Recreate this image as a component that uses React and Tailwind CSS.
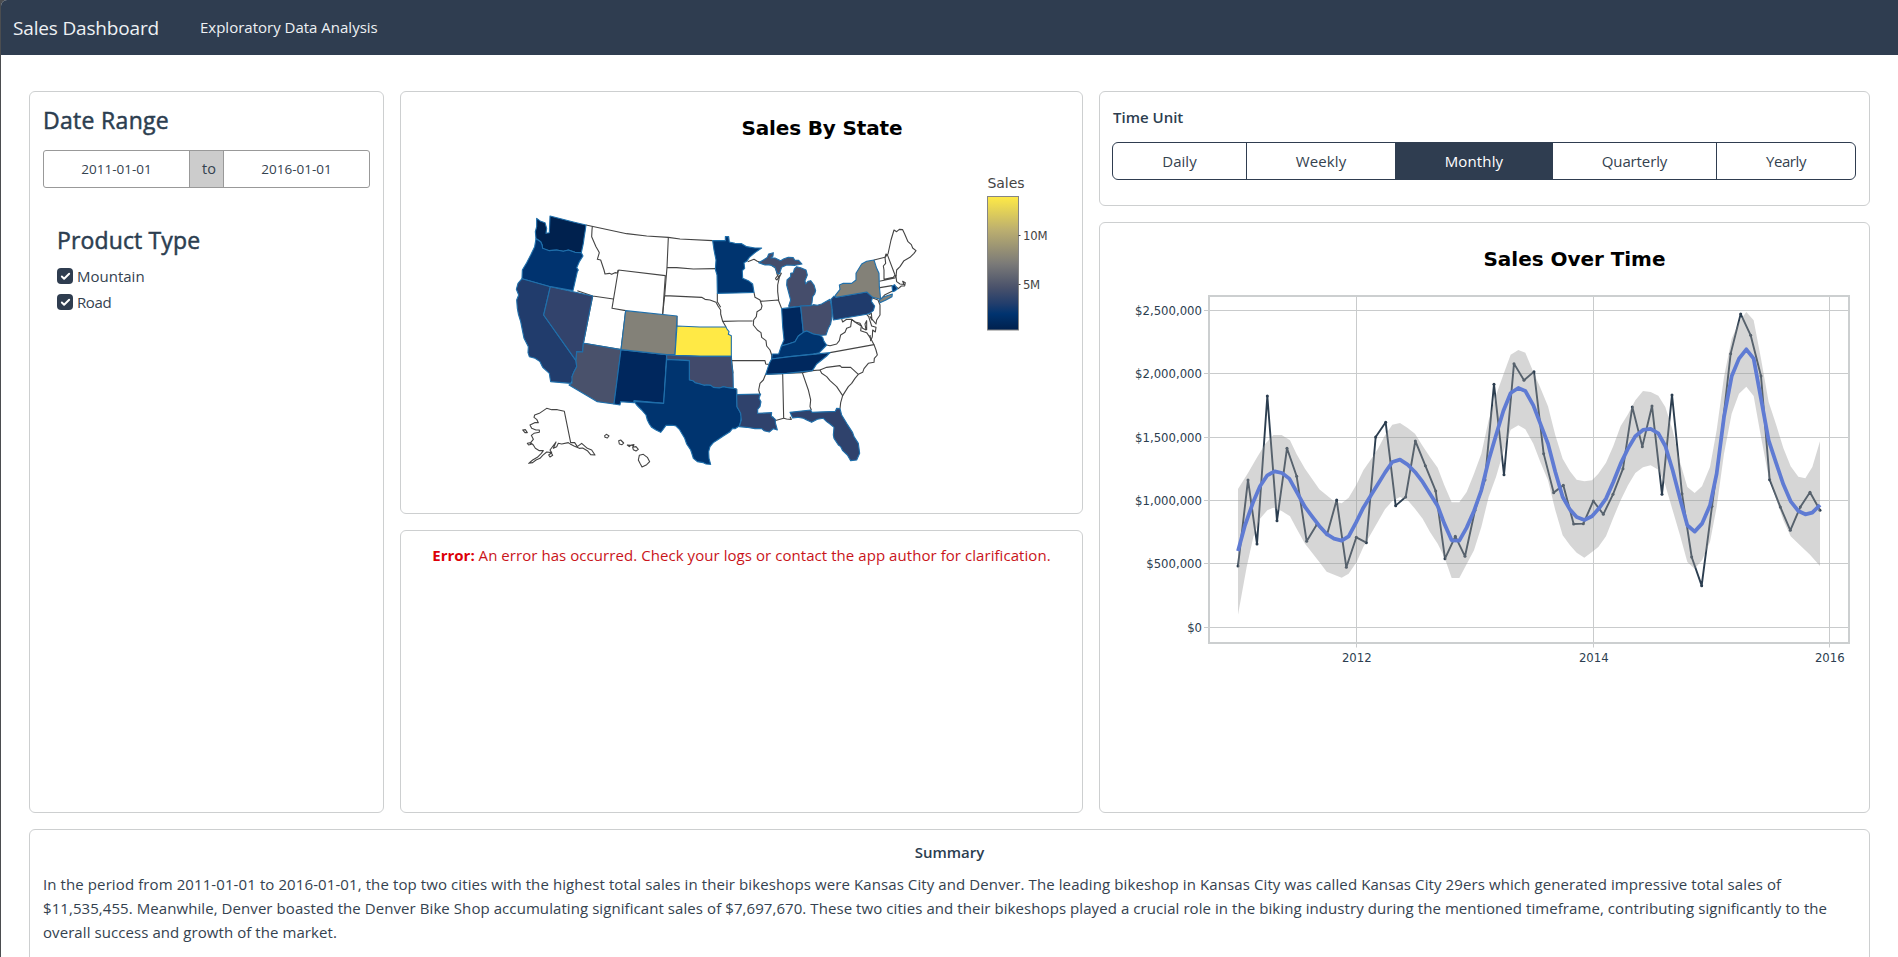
import { Check } from "lucide-react";

const STATES = [
  { id: "WA", fill: "#00214e", d: "M-430-5L-418 4-405 8-400 25-402 40-392 38-390-12-352-2-320 6-282 15-284 30-288 55-290 70-296 98-315 97-335 90-350 94-370 90-392 92-408 88-412 85-414 74-418 65-428 58-432 56-434 35-430 20Z" },
  { id: "OR", fill: "#00336f", d: "M-432 56L-418 65-414 74-412 85-392 92-370 90-350 94-335 90-315 97-296 98-291 108-302 125-310 143-305 150-308 155-321 212-389 200-474 176-473 150-460 128-448 105-436 80Z" },
  { id: "CA", fill: "#213c6c", d: "M-474 176L-389 200-409 285-312 422-310 440-318 455-324 470-322 480-328 490-388 485-390 474-392 460-412 442-420 425-435 415-452 410-456 398-455 380-468 355-474 325-478 305-485 282-488 265-490 240-484 225-491 208-486 190Z" },
  { id: "NV", fill: "#32436c", d: "M-389 200L-262 228-290 370-292 396-310 395-312 422-409 285Z" },
  { id: "AZ", fill: "#49516b", d: "M-287 370L-177 389-198 552-248 545-333 495-324 490-324 470-318 455-310 440-312 422-310 395-292 396-290 370Z" },
  { id: "NM", fill: "#00275d", d: "M-177 389L-40 404-49 550-138 542-138 548-178 545-180 555-198 552Z" },
  { id: "CO", fill: "#838178", d: "M-163 272L-9 288-15 404-40 404-177 389Z" },
  { id: "KS", fill: "#ffe945", d: "M-9 318L60 321 138 321 141 327 147 335 145 343 154 347 154 409 60 409-15 406Z" },
  { id: "OK", fill: "#414a6b", d: "M-40 404L-15 406 60 409 154 409 155 430 159 460 160 505 145 503 130 500 118 504 100 502 92 496 80 495 72 496 60 492 45 488 38 482 28 480 28 422-40 418Z" },
  { id: "TX", fill: "#00346f", d: "M-40 418L28 422 28 480 38 482 45 488 60 492 72 496 80 495 92 496 100 502 118 504 130 500 145 503 160 505 170 508 171 560 180 575 184 590 182 605 178 618 165 626 158 625 150 635 130 648 112 660 100 668 90 680 86 695 87 715 92 733 78 732 70 728 52 725 40 715 36 702 32 690 20 672 14 655 5 640-2 628-12 618-22 616-42 616-52 630-58 637-72 630-85 622-92 612-98 600-102 585-115 570-130 555-138 544-49 550Z" },
  { id: "MN", fill: "#00346f", d: "M98 62L136 62 136 50 146 50 148 66 165 70 185 71 200 80 225 84 245 84 225 98 208 112 200 124 192 128 194 145 187 152 188 175 205 182 218 192 222 217 168 219 112 220 111 165 106 148 108 120 102 90Z" },
  { id: "UP", fill: "#454d6b", d: "M236 128L250 120 262 112 266 102 280 98 279 108 273 114 285 114 302 122 312 116 325 112 340 113 344 120 356 121 366 132 345 136 320 135 305 142 298 162 292 160 285 142 270 134 255 135Z" },
  { id: "MI", fill: "#454d6b", d: "M343 147L350 140 362 143 378 150 382 165 375 182 377 192 384 184 392 182 402 195 407 212 404 222 398 230 396 248 392 257 362 259 328 262 326 258 332 240 324 210 320 195 321 180 332 170 332 160 340 158Z" },
  { id: "IN", fill: "#00285e", d: "M305 266L362 259 370 337 355 348 345 365 325 372 304 378 312 360 308 320Z" },
  { id: "OH", fill: "#454d6b", d: "M362 258L392 257 400 254 412 256 425 252 450 238 456 265 456 290 452 312 445 325 438 345 420 346 400 342 380 333 370 337Z" },
  { id: "KY", fill: "#00346f", d: "M370 337L380 333 400 342 420 346 428 352 432 364 440 375 418 398 400 402 330 410 275 417 277 402 296 402 304 378 325 372 345 365 355 348Z" },
  { id: "TN", fill: "#00285e", d: "M275 417L330 410 450 398 440 408 425 420 410 432 397 452 320 460 257 463 262 448 268 430Z" },
  { id: "LA", fill: "#2f426c", d: "M170 524L242 522 237 535 243 545 240 560 233 568 233 580 275 578 274 588 286 598 286 608 292 630 280 626 268 636 252 632 245 626 225 626 200 622 178 620 184 600 182 580 171 560Z" },
  { id: "FL", fill: "#2f426c", d: "M330 577L392 570 396 577 466 574 470 565 480 566 485 585 500 610 518 638 522 650 535 670 539 700 530 720 512 722 502 705 488 692 482 680 475 675 462 655 460 645 462 622 450 612 440 605 430 595 412 598 395 607 380 600 370 595 352 592 338 594Z" },
  { id: "PA", fill: "#1f3b6c", d: "M453 238L462 228 468 232 560 216 572 222 578 232 574 244 584 258 580 272 572 278 560 283 460 300Z" },
  { id: "NY", fill: "#838178", d: "M468 232L466 226 480 208 478 195 490 190 515 190 528 180 528 160 545 132 560 124 582 120 590 145 597 160 598 200 602 238 578 232 560 216Z" },
  { id: "LI", fill: "#838178", d: "M598 240L612 230 637 222 636 230 618 240 600 248Z" },
  { id: "RI", fill: "#00346f", d: "M636 198L644 194 652 207 644 213 638 215Z" },
];

const BORDERS = [
  "M-282 15L-160 41-100 48-35 52 0 57 98 62",
  "M-263 19L-264 30-265 50-252 80-245 92-242 98-248 118-238 120-228 150-225 162-212 160-205 163-195 158-188 159-185 150",
  "M-185 150L-44 167-52 282M-185 150L-204 265-163 272M-308 212L-262 228-200 237M-262 228L-290 370-177 389-163 272",
  "M-35 52L-39 142-46 227-52 282M-39 142L-10 143 40 147 107 146M-46 227L65 232 75 238 90 240 108 247 114 258 122 270 122 282 128 304 138 321M-9 288L-9 318",
  "M112 220L112 245 122 262M128 304L175 303 218 303",
  "M222 217L225 232 240 240 246 258 243 268 231 275 229 290 221 300 220 315 232 330 243 338 245 352 258 362 260 378 270 390 275 405 275 417",
  "M240 244L295 240 305 266",
  "M203 125L222 118 232 124 250 130 275 136 287 145 292 165 296 172",
  "M286 176L292 168 297 158 304 160 298 172 293 195 293 215 296 240M286 176L291 180 299 166",
  "M154 409L155 422 255 422 257 432 266 433M155 422L159 460M160 505L170 508 170 524 240 524",
  "M257 463L250 480 240 490 236 510 240 524M308 460L311 595 284 602 278 590M257 463L308 460 367 458 397 452",
  "M367 458L385 510 392 540 390 560 394 570M311 595L320 597 334 598 330 590",
  "M397 452L420 450 425 460 440 470 450 482 470 500 480 515 488 527 482 548 480 566",
  "M420 450L440 442 480 437 485 442 512 442 535 463 525 475 515 490 505 500 488 527M535 463L548 457 552 446 565 430 582 427 583 415 592 405 588 390 582 374",
  "M450 398L582 374 573 357 560 338 542 332 544 318 528 308 515 298 M440 375L450 377 470 372 478 362 482 345 495 337 500 325 512 320 515 298",
  "M485 297L488 306 500 298 515 298 525 306 540 310 548 325 558 330 555 312 560 302 560 330M560 283L566 290 575 318 588 322 586 336 578 330 577 350 572 362 570 345",
  "M566 284L574 280 576 300 570 290 588 312 590 300 600 285 600 255 594 240 578 234",
  "M582 120L615 112 624 102 633 60 642 30 650 35 658 28 668 29 674 42 684 65 694 74 698 84 708 92 702 100 690 112 672 122 660 140 650 150 648 170 650 185 660 192 672 193 668 184 676 188 674 198 664 198 655 206 648 200",
  "M615 112L618 102 622 104 645 165 640 172 612 178 612 150 610 138 617 130 615 112M598 184L645 174 648 165M600 203L636 197M638 213L615 224 602 238",
];

const ISLANDS = [
  "M104 645L118 640 140 625 155 629 172 629 193 634 212 728 224 728 232 740 245 730 262 745 275 750 285 765 272 764 262 752 248 744 238 745 222 738 212 733 205 728 185 732 175 730 170 740 160 745 168 726 150 750 155 758 140 756 128 766 120 775 108 780 98 788 86 790 98 780 112 772 124 760 130 752 118 752 106 745 100 735 92 728 100 718 94 706 102 700 118 697 118 690 108 690 95 685 90 675 104 668 115 668 110 658 102 652Z",
  "M68 690L76 689 82 698 75 698ZM82 730L90 728 94 733 86 735ZM146 765L154 759 158 766 150 771Z",
  "M314 707L320 703 327 708 322 714 315 712ZM356 722L362 720 371 729 366 734 358 732ZM382 735L392 736 388 740ZM394 735L402 734 400 739ZM398 742L408 740 415 748 408 753 400 749Z",
  "M418 766L430 763 442 772 449 785 440 794 426 801 420 790 415 780Z",
];

const SALES =
  "384,857 414,599 441,791 472,347 501,721 531,504 560,588 590,783 621,732 651,763 680,659 709,861 739,771 769,787 797,470 827,426 857,676 887,650 916,482 946,556 977,632 1005,835 1036,768 1065,828 1095,690 1125,598 1152,312 1182,583 1212,250 1242,300 1272,274 1301,520 1331,637 1360,615 1391,731 1420,730 1450,662 1480,702 1509,642 1539,565 1567,380 1597,499 1626,377 1656,642 1686,344 1716,640 1745,830 1775,916 1806,678 1834,470 1862,220 1892,101 1922,165 1953,287 1979,598 2011,680 2041,750 2071,680 2100,636 2130,690";

const TREND =
  "384,812 405,735 430,664 450,618 472,585 494,573 516,578 538,595 560,635 585,680 606,708 628,737 650,761 672,775 695,781 716,768 738,727 760,682 783,645 804,611 825,577 847,545 870,538 893,553 915,575 938,605 960,640 983,677 1003,730 1025,780 1048,781 1070,742 1092,692 1114,630 1136,540 1158,465 1180,392 1202,338 1225,323 1246,332 1270,375 1291,430 1314,490 1336,575 1358,650 1380,688 1400,710 1423,719 1446,708 1467,684 1488,655 1510,605 1532,550 1554,505 1576,468 1599,449 1622,446 1645,459 1666,497 1688,570 1710,655 1732,735 1754,754 1776,730 1800,675 1820,580 1842,410 1865,288 1887,235 1909,207 1931,235 1953,355 1976,480 1998,547 2020,612 2042,663 2065,692 2086,702 2107,697 2130,674";

const BAND =
  "384,626 414,578 440,533 466,490 490,464 515,464 540,480 560,522 585,565 628,627 672,663 695,669 716,652 740,612 760,570 783,537 804,505 825,465 847,433 870,428 893,443 915,460 938,497 960,530 983,562 1003,615 1025,666 1048,666 1070,635 1092,580 1114,520 1136,420 1158,345 1180,283 1202,223 1225,209 1246,217 1270,275 1291,322 1314,378 1336,465 1358,535 1380,573 1400,598 1423,603 1446,600 1465,580 1488,547 1510,497 1532,437 1554,402 1576,360 1599,332 1622,335 1645,346 1666,380 1688,450 1710,545 1732,620 1754,638 1776,618 1800,560 1820,450 1842,290 1865,175 1887,125 1909,95 1931,120 1953,235 1976,365 1998,432 2020,503 2042,558 2065,589 2086,594 2107,560 2130,483 2130,857 2100,823 2070,795 2042,768 2020,720 1998,655 1976,590 1953,470 1931,347 1909,319 1887,340 1865,400 1842,520 1820,680 1800,785 1776,840 1754,865 1732,845 1710,765 1688,690 1666,615 1645,568 1622,555 1599,561 1576,578 1554,615 1532,660 1510,712 1488,768 1465,800 1446,815 1423,832 1400,817 1380,795 1358,765 1336,690 1314,600 1291,545 1270,490 1246,447 1225,435 1202,448 1180,515 1158,590 1136,650 1114,740 1092,810 1048,893 1025,893 1003,830 983,790 960,755 938,715 915,685 893,660 870,650 847,662 825,687 783,760 760,800 740,845 716,880 695,892 650,874 628,845 585,790 560,745 540,708 515,692 490,682 472,690 450,715 430,770 410,860 384,1003";

const Y_TICKS = [
  ["$2,500,000", 310.5],
  ["$2,000,000", 373.5],
  ["$1,500,000", 437.5],
  ["$1,000,000", 500.5],
  ["$500,000", 563.5],
  ["$0", 627.5],
];
const X_TICKS = [["2012", 1356.5], ["2014", 1593.5], ["2016", 1829.5]];

function Card({ className = "", children }) {
  return <section className={`rounded-[6px] border border-[#cdcfd0] bg-white ${className}`}>{children}</section>;
}

function SalesMap() {
  return (
    <svg viewBox="401 92 681 421" className="block h-[421px] w-[681px]">
      <defs>
        <linearGradient id="cividis" x1="0" y1="1" x2="0" y2="0">
          <stop offset="0" stopColor="#00204d" />
          <stop offset="0.12" stopColor="#00336f" />
          <stop offset="0.2" stopColor="#233e6c" />
          <stop offset="0.32" stopColor="#4a526b" />
          <stop offset="0.5" stopColor="#7c7b78" />
          <stop offset="0.75" stopColor="#bcaf6f" />
          <stop offset="1" stopColor="#ffea46" />
        </linearGradient>
      </defs>
      <text x="741.5" y="134.5" textLength="161" className="fill-black font-['DejaVu_Sans',sans-serif] text-[20px] font-bold">
        Sales By State
      </text>
      <g transform="translate(680 220) scale(0.33333)" fill="none" strokeWidth="3.3" strokeLinejoin="round" className="stroke-[#444]">
        {BORDERS.map((d, i) => <path key={i} d={d} />)}
        {STATES.map((s) => <path key={s.id} d={s.d} fill={s.fill} stroke="#1f6fab" />)}
      </g>
      <g transform="translate(500 200) scale(0.33333)" fill="none" strokeWidth="3.3" strokeLinejoin="round" className="stroke-[#444]">
        {ISLANDS.map((d, i) => <path key={i} d={d} />)}
      </g>
      <g className="fill-[#444] font-['DejaVu_Sans',sans-serif]">
        <text x="987.5" y="187.7" textLength="37" className="text-[14px]">Sales</text>
        <text x="1023" y="239.7" textLength="24.5" className="text-[11.7px]">10M</text>
        <text x="1023" y="288.5" textLength="17" className="text-[11.7px]">5M</text>
      </g>
      <rect x="987.5" y="196.5" width="31" height="133.5" fill="url(#cividis)" stroke="#858585" />
      <path d="M1018.500 235.500h2M1018.500 284.500h2" stroke="#444" />
    </svg>
  );
}

function SalesOverTime() {
  return (
    <svg viewBox="1100 223 769 589" className="block h-[589px] w-[769px]">
      <text x="1483.500" y="265.500" textLength="182" className="fill-black font-['DejaVu_Sans',sans-serif] text-[20px] font-bold">
        Sales Over Time
      </text>
      <g stroke="#c9cbcc" fill="none">
        {Y_TICKS.map(([label, y]) => <path key={label} d={`M1204 ${y}H1849`} />)}
        {X_TICKS.map(([label, x]) => <path key={label} d={`M${x} 296V647.500`} />)}
      </g>
      <rect x="1209" y="296" width="640" height="347" fill="none" stroke="#cccfd0" strokeWidth="2" />
      <g transform="translate(1110 280.3) scale(0.33333)" fill="none">
        <polyline points={SALES} stroke="#2c3e50" strokeWidth="5.700" strokeLinejoin="round" />
        {SALES.split(" ").map((p) => {
          const [x, y] = p.split(",");
          return <circle key={p} cx={x} cy={y} r="4.500" fill="#2c3e50" />;
        })}
        <polygon points={BAND} fill="#999" fillOpacity="0.4" />
        <polyline points={TREND} stroke="#5f7bd3" strokeWidth="11.300" strokeLinejoin="round" />
      </g>
      <g className="fill-[#2c3e50] font-['DejaVu_Sans',sans-serif] text-[11.7px]">
        {Y_TICKS.map(([label, y]) => (
          <text key={label} x="1202" y={y + 4.2} textAnchor="end">{label}</text>
        ))}
        {X_TICKS.map(([label, x]) => (
          <text key={label} x={x + 0.3} y="661.7" textAnchor="middle">{label}</text>
        ))}
      </g>
    </svg>
  );
}

function ProductOption({ label, className }) {
  return (
    <label className="flex h-[26px] items-center">
      <span className="flex size-4 items-center justify-center rounded-[4px] bg-[#2f3d50] text-white">
        <Check size={11} strokeWidth={4.2} />
      </span>
      <span className={`ml-[4px] ${className}`}>{label}</span>
    </label>
  );
}

export default function App() {
  return (
    <div className="h-[957px] w-[1898px] overflow-hidden bg-[#4b4d50] pl-px font-['Open_Sans',sans-serif] text-[15px] leading-6 text-[#34424f]">
      <div className="flex h-full flex-col overflow-hidden rounded-tl-[6px] bg-white">
        <header className="flex h-[55px] shrink-0 items-center bg-[#2f3d50] pl-3 text-[#eef1f4]">
          <span className="w-[187px] text-[19px] tracking-[-0.17px]">Sales Dashboard</span>
          <span className="pb-px">Exploratory Data Analysis</span>
        </header>

        <main className="flex flex-col gap-4 pl-7 pr-7 pt-9">
          <div className="grid h-[722px] grid-cols-[355px_683px_771px] gap-4">
            <Card className="px-[13px] pt-[14px]">
              <h2 className="text-[23px] font-medium leading-[29px] tracking-[0.3px] text-[#2c3e50] [-webkit-text-stroke:0.5px_#2c3e50]">Date Range</h2>
              <div className="mt-[15px] flex h-[38px] w-[327px] overflow-hidden rounded-[3px] border border-[#999] text-[13.5px]">
                <span className="flex w-[145px] items-center justify-center">2011-01-01</span>
                <span className="flex w-[35px] items-center border-x border-[#999] bg-[#ccc] pl-3 text-[14.5px]">to</span>
                <span className="flex flex-1 items-center justify-center">2016-01-01</span>
              </div>
              <div className="pl-[14px] pt-[38px]">
                <h2 className="text-[23px] font-medium leading-[29px] tracking-[0.14px] text-[#2c3e50] [-webkit-text-stroke:0.5px_#2c3e50]">Product Type</h2>
                <div className="pt-[8px]">
                  <ProductOption label="Mountain" className="tracking-normal" />
                  <ProductOption label="Road" className="tracking-[-0.4px]" />
                </div>
              </div>
            </Card>

            <div className="flex flex-col gap-4">
              <Card className="h-[423px]">
                <SalesMap />
              </Card>
              <Card className="flex-1 pt-[12px] text-center text-[#c9141a]">
                <p>
                  <strong className="font-bold text-[#dc0008]">Error:</strong>{" "}
                  <span className="tracking-[0.06px]">An error has occurred. Check your logs or contact the app author for clarification.</span>
                </p>
              </Card>
            </div>

            <div className="flex flex-col gap-4">
              <Card className="h-[115px] px-3 pt-[13px]">
                <h3 className="pl-px font-semibold text-[#2c3e50]">Time Unit</h3>
                <div className="mt-[13px] flex h-[38px] w-[744px] overflow-hidden rounded-[6px] border border-[#2f3d50]">
                  <button className="w-[133px]">Daily</button>
                  <button className="w-[149px] border-l border-[#2f3d50] tracking-[0.12px]">Weekly</button>
                  <button className="w-[158px] bg-[#2f3d50] tracking-[0.14px] text-white">Monthly</button>
                  <button className="w-[163px] tracking-[-0.13px]">Quarterly</button>
                  <button className="flex-1 border-l border-[#2f3d50] tracking-[-0.4px]">Yearly</button>
                </div>
              </Card>
              <Card className="flex-1">
                <SalesOverTime />
              </Card>
            </div>
          </div>

          <Card className="h-[150px] px-[13px] pt-[10px]">
            <h3 className="text-center font-semibold text-[#2c3e50]">Summary</h3>
            <p className="mt-2 tracking-[0.099px]">
              In the period from 2011-01-01 to 2016-01-01, the top two cities with the highest total sales in their bikeshops were Kansas City and Denver. The leading bikeshop in Kansas City was called Kansas City 29ers which generated impressive total sales of{" "}
              <span className="tracking-[0.073px]">
                $11,535,455. Meanwhile, Denver boasted the Denver Bike Shop accumulating significant sales of $7,697,670. These two cities and their bikeshops played a crucial role in the biking industry during the mentioned timeframe, contributing significantly to the overall success and growth of the market.
              </span>
            </p>
          </Card>
        </main>
      </div>
    </div>
  );
}
